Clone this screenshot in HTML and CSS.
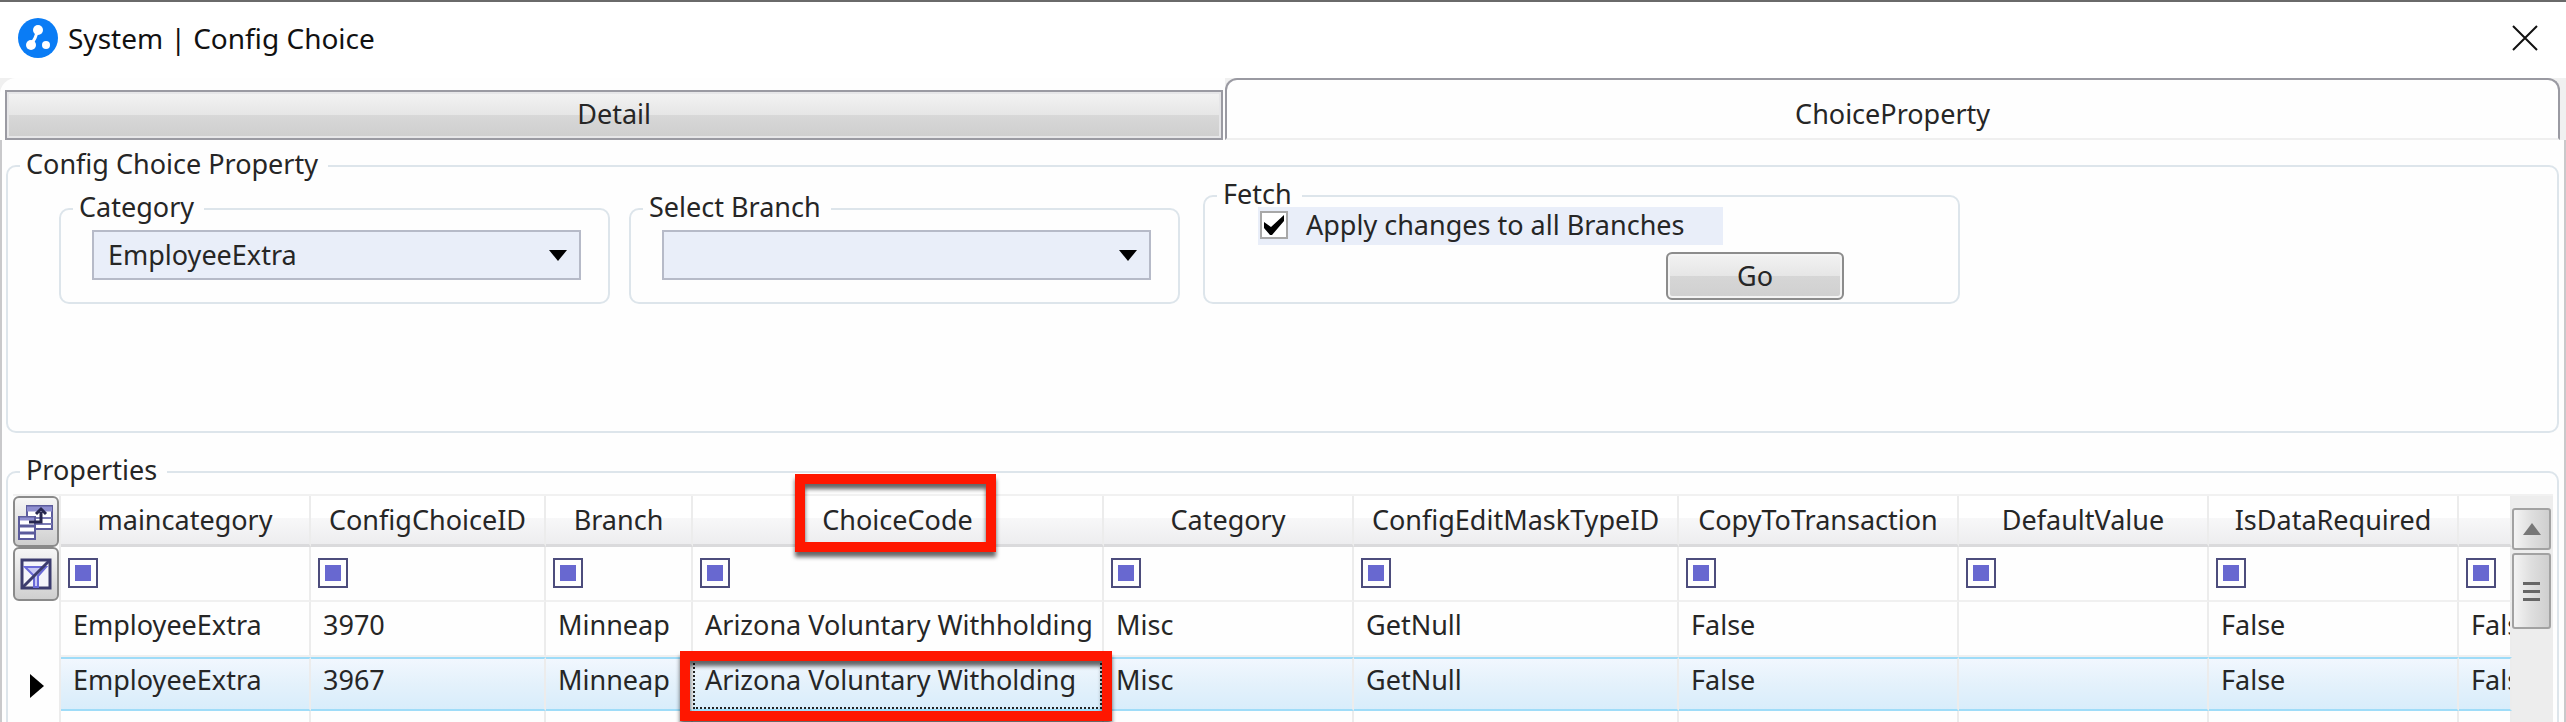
FILE: index.html
```html
<!DOCTYPE html>
<html lang="en">
<head>
    <meta charset="UTF-8">
    <meta name="viewport" content="width=device-width, initial-scale=1.0">
    <title>System | Config Choice</title>
    <link rel="stylesheet" href="styles.css">
</head>
<body>
    <header class="titlebar">
        <svg class="logo" viewBox="0 0 40 40" aria-hidden="true">
            <circle cx="20" cy="20" r="20" fill="#0a7cf5"/>
            <path d="M20 12 L17 20 L13 27" fill="none" stroke="#fff" stroke-width="3"/>
            <circle cx="20" cy="12" r="5" fill="#fff"/>
            <circle cx="13" cy="27" r="5" fill="#fff"/>
            <circle cx="28" cy="27" r="4" fill="#fff"/>
        </svg>
        <h1>System | Config Choice</h1>
        <button class="close" type="button" aria-label="Close">
            <svg viewBox="0 0 26 26" aria-hidden="true"><path d="M1 1 L25 25 M25 1 L1 25" stroke="#111" stroke-width="2"/></svg>
        </button>
    </header>

    <nav class="tabs" role="tablist">
        <div class="tab-slot"><button class="tab" type="button" role="tab">Detail</button></div>
        <button class="tab tab-active" type="button" role="tab" aria-selected="true">ChoiceProperty</button>
    </nav>

    <main>
        <fieldset class="filters">
            <legend>Config Choice Property</legend>
            <div class="filter-row">
                <fieldset class="combo-box">
                    <legend><label for="category">Category</label></legend>
                    <div class="combo">
                        <select id="category"><option>EmployeeExtra</option></select>
                    </div>
                </fieldset>
                <fieldset class="combo-box">
                    <legend><label for="branch">Select Branch</label></legend>
                    <div class="combo">
                        <select id="branch"><option></option></select>
                    </div>
                </fieldset>
                <fieldset class="fetch">
                    <legend>Fetch</legend>
                    <label class="check"><input type="checkbox" checked>Apply changes to all Branches</label>
                    <button class="go" type="button">Go</button>
                </fieldset>
            </div>
        </fieldset>

        <fieldset class="properties">
            <legend>Properties</legend>
            <div class="grid">
                <table>
                    <colgroup>
                        <col class="w-select"><col class="w-main"><col class="w-id"><col class="w-branch"><col class="w-code">
                        <col class="w-default"><col class="w-mask"><col class="w-copy"><col class="w-default"><col class="w-default"><col>
                    </colgroup>
                    <thead>
                        <tr>
                            <td class="tool">
                                <button type="button" aria-label="Choose columns">
                                    <svg viewBox="0 0 36 36" aria-hidden="true">
                                        <rect x="9" y="2" width="25" height="23" fill="#fff" stroke="#5c5c9c" stroke-width="2"/>
                                        <path d="M9 5 H34" stroke="#8f8fd0" stroke-width="5"/>
                                        <path d="M18 14 H34 M18 20 H34" stroke="#7a7ab4" stroke-width="2"/>
                                        <rect x="1" y="13" width="16" height="22" fill="#fff" stroke="#5c5c9c" stroke-width="2"/>
                                        <path d="M2 15 H16" stroke="#8f8fd0" stroke-width="3"/>
                                        <path d="M2 22 H16 M2 29 H16" stroke="#5c5c9c" stroke-width="3"/>
                                        <path d="M11 18 H23 V8 M18 10 L23 5 L28 10" fill="none" stroke="#26264e" stroke-width="3"/>
                                    </svg>
                                </button>
                            </td>
                            <th>maincategory</th>
                            <th>ConfigChoiceID</th>
                            <th>Branch</th>
                            <th class="marked">ChoiceCode</th>
                            <th>Category</th>
                            <th>ConfigEditMaskTypeID</th>
                            <th>CopyToTransaction</th>
                            <th>DefaultValue</th>
                            <th>IsDataRequired</th>
                            <th></th>
                        </tr>
                        <tr class="filter">
                            <td class="tool">
                                <button type="button" aria-label="Clear filters">
                                    <svg viewBox="0 0 32 32" aria-hidden="true">
                                        <rect x="2" y="2" width="28" height="28" fill="#f4f4fa" stroke="#3c3c6e" stroke-width="3"/>
                                        <path d="M5 9 H26 L18 18 V29 H14 V18 Z" fill="#c8c8f4" stroke="#6a6ad8" stroke-width="2"/>
                                        <path d="M3 29 L29 3" stroke="#3c3c6e" stroke-width="3"/>
                                    </svg>
                                </button>
                            </td>
                            <td><button class="op" type="button" aria-label="Filter maincategory"></button></td>
                            <td><button class="op" type="button" aria-label="Filter ConfigChoiceID"></button></td>
                            <td><button class="op" type="button" aria-label="Filter Branch"></button></td>
                            <td><button class="op" type="button" aria-label="Filter ChoiceCode"></button></td>
                            <td><button class="op" type="button" aria-label="Filter Category"></button></td>
                            <td><button class="op" type="button" aria-label="Filter ConfigEditMaskTypeID"></button></td>
                            <td><button class="op" type="button" aria-label="Filter CopyToTransaction"></button></td>
                            <td><button class="op" type="button" aria-label="Filter DefaultValue"></button></td>
                            <td><button class="op" type="button" aria-label="Filter IsDataRequired"></button></td>
                            <td><button class="op" type="button" aria-label="Filter last column"></button></td>
                        </tr>
                    </thead>
                    <tbody>
                        <tr>
                            <td class="rowhead"></td>
                            <td>EmployeeExtra</td>
                            <td>3970</td>
                            <td>Minneap</td>
                            <td>Arizona Voluntary Withholding</td>
                            <td>Misc</td>
                            <td>GetNull</td>
                            <td>False</td>
                            <td></td>
                            <td>False</td>
                            <td>False</td>
                        </tr>
                        <tr class="selected">
                            <td class="rowhead"><svg viewBox="0 0 14 24" aria-hidden="true"><path d="M0 0 L14 12 L0 24 Z"/></svg></td>
                            <td>EmployeeExtra</td>
                            <td>3967</td>
                            <td>Minneap</td>
                            <td class="marked focused">Arizona Voluntary Witholding</td>
                            <td>Misc</td>
                            <td>GetNull</td>
                            <td>False</td>
                            <td></td>
                            <td>False</td>
                            <td>False</td>
                        </tr>
                        <tr>
                            <td class="rowhead"></td>
                            <td></td><td></td><td></td><td></td><td></td>
                            <td></td><td></td><td></td><td></td><td></td>
                        </tr>
                    </tbody>
                </table>
                <div class="scrollbar">
                    <button class="up" type="button" aria-label="Scroll up">
                        <svg viewBox="0 0 18 12" aria-hidden="true"><path d="M9 0 L18 12 H0 Z" fill="#777"/></svg>
                    </button>
                    <div class="thumb"><i></i><i></i><i></i></div>
                </div>
            </div>
        </fieldset>
    </main>
</body>
</html>
```
FILE: styles.css
```css
* {
    margin: 0;
    padding: 0;
    box-sizing: border-box;
}

body {
    height: 100vh;
    overflow: hidden;
    display: flex;
    flex-direction: column;
    border-top: 2px solid #6a6a6a;
    background-color: #fefefe;
    color: #262626;
    font-family: "Noto Sans", "Open Sans", sans-serif;
    font-size: 27px;
    line-height: 36px;
}

button, select, input {
    font: inherit;
    color: inherit;
}

svg {
    display: block;
}

/* title bar */

.titlebar {
    flex-shrink: 0;
    display: flex;
    align-items: center;
    gap: 10px;
    height: 76px;
    padding: 0 28px 4px 18px;
    background-color: #fff;
}

.titlebar h1 {
    flex: 1;
    font-size: 28px;
    font-weight: normal;
    color: #111;
}

.logo {
    width: 40px;
    height: 40px;
}

.close {
    width: 26px;
    height: 26px;
    border: none;
    background: none;
}

/* tabs */

.tabs {
    flex-shrink: 0;
    display: flex;
    height: 62px;
    padding-right: 6px;
    background-color: #f0f0f0;
}

.tab-slot {
    flex: 1222;
    display: flex;
    padding: 12px 2px 0 5px;
    border-top-left-radius: 16px;
    background-color: #fefefe;
}

.tab {
    flex: 1;
    padding-bottom: 3px;
    border: 2px solid #9a9aa2;
    box-shadow: inset 0 0 0 2px #e6e6e8;
    background: linear-gradient(#f3f3f3, #e6e6e6 50%, #d8d8d8 50%, #cecece);
}

.tab-active {
    flex: 1335;
    border-bottom-color: #efefef;
    border-radius: 12px 12px 0 0;
    padding: 10px 0 0;
    box-shadow: none;
    background: #fefefe;
}

/* group boxes */

main {
    flex: 1;
    display: flex;
    flex-direction: column;
    gap: 21px;
    padding: 8px 5px 0 4px;
    border: solid #c9c9cb;
    border-width: 0 2px;
}

fieldset {
    min-width: 0;
    border: 2px solid #dde5eb;
    border-radius: 10px;
}

legend {
    margin-left: 12px;
    padding: 0 10px 4px 6px;
    line-height: 32px;
}

.filters {
    flex-shrink: 0;
    height: 285px;
}

.filter-row {
    display: flex;
    align-items: flex-end;
    height: 120px;
    margin: 0 51px;
}

.combo-box {
    width: 551px;
    height: 113px;
    margin-right: 19px;
}

.combo {
    position: relative;
    margin: 3px 27px 0 31px;
}

.combo::after {
    content: "";
    position: absolute;
    top: 20px;
    right: 14px;
    width: 18px;
    height: 11px;
    background-color: #000;
    clip-path: polygon(0 0, 100% 0, 50% 100%);
    pointer-events: none;
}

.combo select {
    appearance: none;
    display: block;
    width: 100%;
    height: 50px;
    padding: 0 14px;
    border: 2px solid #b6bac8;
    border-radius: 0;
    background-color: #e9eef9;
}

.fetch {
    width: 757px;
    height: 126px;
    margin-left: 4px;
}

.check {
    display: flex;
    gap: 18px;
    width: 465px;
    height: 38px;
    padding-left: 2px;
    margin: -7px 0 0 53px;
    background-color: #e9eef9;
}

.check input {
    appearance: none;
    width: 28px;
    height: 28px;
    margin-top: 4px;
    border: 2px solid #a8a8a8;
    background-color: #fff;
}

.check input:checked::before {
    content: "";
    display: block;
    width: 20px;
    height: 20px;
    margin: 2px;
    background-color: #000;
    clip-path: polygon(0 35%, 35% 60%, 100% 0, 100% 30%, 40% 100%, 30% 100%, 0 65%);
}

.go {
    display: block;
    width: 178px;
    height: 48px;
    margin: 7px 0 0 461px;
    border: 2px solid #8c8c8c;
    border-radius: 6px;
    box-shadow: inset 0 0 0 2px #f4f4f4;
    background: linear-gradient(#f2f2f2, #e6e6e6 50%, #d6d6d6 50%, #d0d0d0);
}

/* properties grid */

.properties {
    flex: 1;
}

.grid {
    display: flex;
    align-items: stretch;
    margin: 4px 4px 0 5px;
    border-top: 2px solid #f1f1f1;
}

table {
    flex: 1;
    min-width: 0;
    width: 100%;
    table-layout: fixed;
    border-collapse: separate;
    border-spacing: 0;
}

.w-select { width: 48px; }
.w-main { width: 250px; }
.w-id { width: 235px; }
.w-branch { width: 147px; }
.w-code { width: 411px; }
.w-default { width: 250px; }
.w-mask { width: 325px; }
.w-copy { width: 280px; }

th, td {
    height: 55px;
    border-right: 2px solid #ececec;
    white-space: nowrap;
    text-align: left;
    vertical-align: top;
}

th {
    height: 51px;
    padding-top: 6px;
    border-bottom: 3px solid #dadadc;
    font-weight: normal;
    text-align: center;
    background: linear-gradient(#fff 45%, #f8f8f9 45%, #ededef);
}

td {
    padding: 5px 0 0 12px;
    border-bottom: 2px solid #f0f0f0;
    overflow: hidden;
}

.filter td {
    padding: 11px 0 0 7px;
}

.tool, .filter .tool {
    height: 51px;
    padding: 0;
    border-bottom: none;
}

.tool button {
    display: grid;
    place-items: center;
    width: 46px;
    height: 51px;
    border: 2px solid #8a8a8a;
    border-radius: 6px;
    background: linear-gradient(#f6f6f6, #cfcfcf);
}

.filter .tool button {
    height: 54px;
}

.tool svg {
    width: 36px;
    height: 36px;
}

.filter .tool svg {
    width: 32px;
    height: 32px;
}

.op {
    display: block;
    width: 30px;
    height: 30px;
    border: 2px solid #4c4c7c;
    background: #6868d0 content-box;
    padding: 5px;
}

.rowhead {
    padding: 0;
    border-bottom: none;
    background-color: #fefefe;
}

.rowhead svg {
    width: 14px;
    height: 24px;
    margin: 17px 0 0 17px;
}

.selected td {
    height: 54px;
}

.selected td:not(.rowhead) {
    padding-top: 3px;
    border-top: 2px solid #9fdcf8;
    border-bottom: 2px solid #9fdcf8;
    background: linear-gradient(#f1f7fe, #e4f1fb 50%, #d8edfb);
}

/* callouts over the grid */

.marked {
    position: relative;
    overflow: visible;
}

.marked::after {
    content: "";
    position: absolute;
    z-index: 1;
    inset: -22px 106px -8px 102px;
    border: 10px solid #ff1700;
    filter: drop-shadow(0 5px 2px rgba(0, 0, 0, 0.6));
}

.focused::after {
    inset: -8px -10px -12px -13px;
}

.focused::before {
    content: "";
    position: absolute;
    inset: 0;
    border: 2px dotted #222;
}

/* scroll bar */

.scrollbar {
    width: 41px;
    padding-top: 12px;
    background-color: #ededed;
}

.up, .thumb {
    display: flex;
    flex-direction: column;
    align-items: center;
    justify-content: center;
    width: 39px;
    height: 42px;
    border: 2px solid #a2a2a2;
    border-radius: 3px;
    background: linear-gradient(90deg, #f4f4f4, #dedede 50%, #cfcfcf);
}

.up svg {
    width: 18px;
    height: 12px;
}

.thumb {
    gap: 5px;
    height: 76px;
    margin-top: 3px;
}

.thumb i {
    width: 17px;
    height: 3px;
    background-color: #666;
}
```
